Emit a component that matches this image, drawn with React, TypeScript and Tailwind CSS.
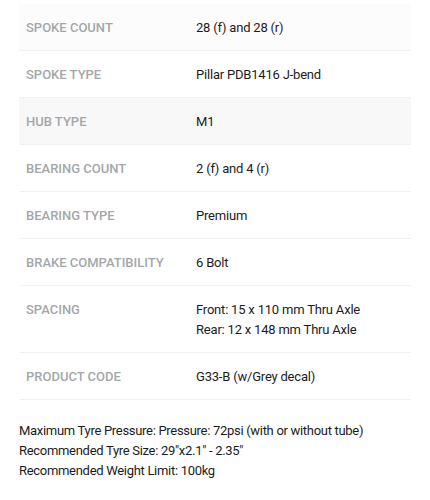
import React from 'react';

interface Spec {
  label: string;
  value: string[];
  bg?: string;
}

const specs: Spec[] = [
  { label: 'Spoke Count', value: ['28 (f) and 28 (r)'], bg: 'bg-[#fcfcfc]' },
  { label: 'Spoke Type', value: ['Pillar PDB1416 J-bend'] },
  { label: 'Hub Type', value: ['M1'], bg: 'bg-[#f8f8f8]' },
  { label: 'Bearing Count', value: ['2 (f) and 4 (r)'] },
  { label: 'Bearing Type', value: ['Premium'] },
  { label: 'Brake Compatibility', value: ['6 Bolt'] },
  { label: 'Spacing', value: ['Front: 15 x 110 mm Thru Axle', 'Rear: 12 x 148 mm Thru Axle'] },
  { label: 'Product Code', value: ['G33-B (w/Grey decal)'] },
];

export default function App() {
  return (
    <div className="w-[430px] h-[500px] bg-white pt-[4px] font-['Roboto',sans-serif] text-[13px] text-[#1c1c1c]">
      <div className="mx-[19px] flex flex-col">
        {specs.map((s) => (
          <div
            key={s.label}
            className={`flex border-b border-[#f2f2f2] pt-[14px] pb-[12px] ${s.bg ?? 'bg-white'}`}
          >
            <div className="w-[177px] pl-[7px] font-medium uppercase text-[#a4a7aa] leading-5">
              {s.label}
            </div>
            <div className="flex flex-col leading-5 tracking-[-0.2px]">
              {s.value.map((v) => (
                <span key={v}>{v}</span>
              ))}
            </div>
          </div>
        ))}
      </div>
      <div className="mx-[19px] mt-[21px] flex flex-col leading-5 tracking-[-0.3px]">
        <span>Maximum Tyre Pressure: Pressure: 72psi (with or without tube)</span>
        <span>Recommended Tyre Size: 29"x2.1" - 2.35"</span>
        <span>Recommended Weight Limit: 100kg</span>
      </div>
    </div>
  );
}
